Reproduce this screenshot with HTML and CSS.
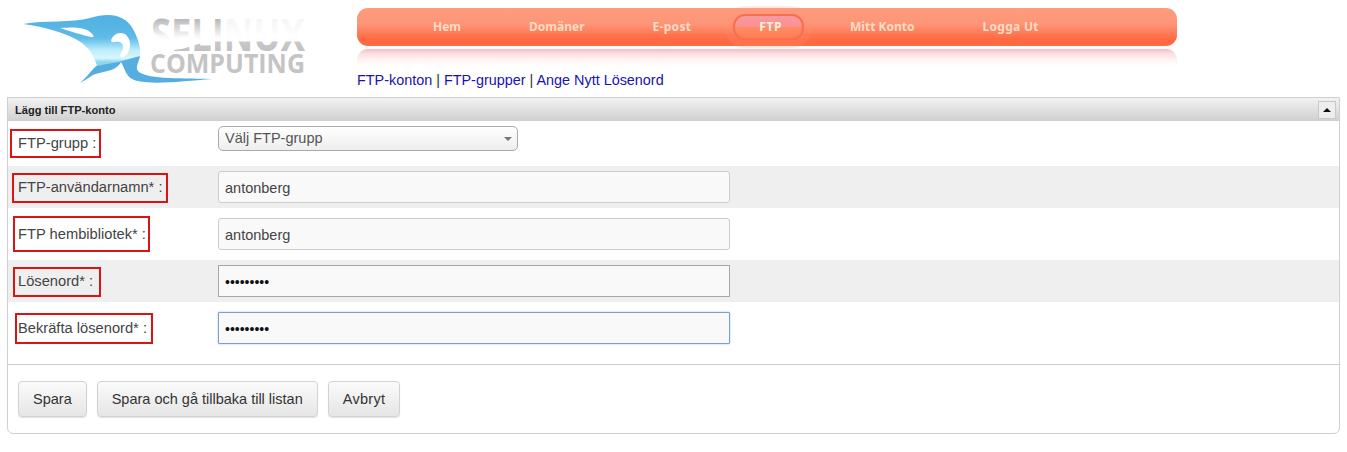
FILE: index.html
```html
<!DOCTYPE html>
<html lang="sv">
<head>
<meta charset="utf-8">
<title>FTP</title>
<link rel="stylesheet" href="styles.css">
</head>
<body>
<header class="top">
  <div class="logo">
    <svg width="357" height="89" viewBox="0 0 357 89" xmlns="http://www.w3.org/2000/svg">
      <defs>
        <linearGradient id="bird" x1="0" y1="14" x2="0" y2="62" gradientUnits="userSpaceOnUse">
          <stop offset="0" stop-color="#4fb0e2"/>
          <stop offset=".5" stop-color="#5fbbe8"/>
          <stop offset=".76" stop-color="#bfeefb"/>
          <stop offset=".92" stop-color="#d8f6fc"/>
          <stop offset="1" stop-color="#8fd6f0"/>
        </linearGradient>
        <linearGradient id="sel" x1="0" y1="18" x2="0" y2="52" gradientUnits="userSpaceOnUse">
          <stop offset="0" stop-color="#b4b4b4"/>
          <stop offset=".54" stop-color="#f8f8f8"/>
          <stop offset=".66" stop-color="#ffffff"/>
          <stop offset=".72" stop-color="#c8c8c8"/>
          <stop offset="1" stop-color="#c0c0c0"/>
        </linearGradient>
      </defs>
      <g font-family="'Open Sans','Liberation Sans',sans-serif" font-weight="700">
        <text class="logo-big" x="151" y="51" textLength="154" lengthAdjust="spacingAndGlyphs" fill="url(#sel)">SELINUX</text>
        <path fill="#fff" d="M145 39H215L182 49L145 53Z"/>
        <path fill="#fff" fill-opacity=".85" d="M222 14H312V38H222Z"/>
        <text class="logo-small" x="150" y="73" textLength="155" lengthAdjust="spacingAndGlyphs" fill="#c4c4c4">COMPUTING</text>
      </g>
      <path fill="url(#bird)" d="M23 24C45 20 72 23 90 18C110 12 125 15 133 29C139 40 141 49 140 57L122 61L116 64L97 66C95 58 90 49 82 43C68 33 45 27 23 24Z"/>
      <path fill="#fff" d="M60 28C72 27 84 27 90 32C94 35 95 38 91 37C82 35 70 31 60 28Z"/>
      <path fill="#fff" d="M111 41C112 34 122 30 127 36C132 42 131 52 124 57C121 59 119 56 121 53C124 49 124 43 119 42C116 41 113 44 111 41Z"/>
      <path fill="#56ade0" d="M80 83C86 78 90 72 96 66L118 62L140 56C139 62 135 67 138 71C145 79 175 78 212 79C185 81 155 85 138 81C125 78 126 70 121 62C116 72 102 71 93 75C88 78 84 81 80 83Z"/>
    </svg>
  </div>
  <div class="top-main">
    <nav class="nav">
      <a class="nav-item" href="#">Hem</a>
      <a class="nav-item" href="#">Domäner</a>
      <a class="nav-item nav-wide" href="#">E-post</a>
      <a class="nav-item nav-active" href="#">FTP</a>
      <a class="nav-item" href="#">Mitt Konto</a>
      <a class="nav-item nav-wide" href="#">Logga Ut</a>
    </nav>
    <div class="nav-reflect"></div>
    <div class="subnav"><a href="#">FTP-konton</a> | <a href="#">FTP-grupper</a> | <a href="#">Ange Nytt Lösenord</a></div>
  </div>
</header>

<section class="panel">
  <div class="panel-title">
    <span>Lägg till FTP-konto</span>
    <button class="collapse" type="button" aria-label="Fäll ihop"><i class="tri"></i></button>
  </div>
  <form class="form">
    <div class="row row-a">
      <div class="label-col"><label class="mark mark-1">FTP-grupp :</label></div>
      <div class="select-wrap">
        <select class="select"><option>Välj FTP-grupp</option></select>
        <i class="select-arrow"></i>
      </div>
    </div>
    <div class="row row-b alt">
      <div class="label-col"><label class="mark mark-2">FTP-användarnamn* :</label></div>
      <input class="field" type="text" value="antonberg">
    </div>
    <div class="row row-c">
      <div class="label-col"><label class="mark mark-3">FTP hembibliotek* :</label></div>
      <input class="field" type="text" value="antonberg">
    </div>
    <div class="row row-b alt">
      <div class="label-col"><label class="mark mark-4">Lösenord* :</label></div>
      <input class="field field-hover" type="password" value="123456789">
    </div>
    <div class="row row-c">
      <div class="label-col"><label class="mark mark-5">Bekräfta lösenord* :</label></div>
      <input class="field field-focus" type="password" value="123456789">
    </div>
    <div class="actions">
      <button class="btn" type="button">Spara</button>
      <button class="btn" type="button">Spara och gå tillbaka till listan</button>
      <button class="btn btn-wide" type="button">Avbryt</button>
    </div>
  </form>
</section>
</body>
</html>
```
FILE: styles.css
```css
* { box-sizing: border-box; }
html, body { margin: 0; padding: 0; background: #fff; }
body { font-family: "Liberation Sans", Arial, sans-serif; font-size: 14.5px; color: #444; }

.top { display: flex; height: 97px; padding-top: 8px; }
.logo { width: 357px; height: 89px; margin-top: -8px; flex: none; }
.logo svg { display: block; }
.logo-big { font-size: 44px; }
.logo-small { font-size: 26px; }
.top-main { width: 820px; flex: none; }

.nav {
  display: flex; align-items: center; gap: 68px;
  height: 38px; padding-left: 76px;
  border-radius: 11px;
  background: linear-gradient(#fd9d7e 0, #fd9577 42%, #ff6a42 82%, #ff6a42 100%);
}
.nav-item {
  font-family: "Noto Sans", "DejaVu Sans", sans-serif; font-size: 12px; font-weight: 700;
  color: #ffdcc4; text-decoration: none; line-height: 14px;
}
.nav-wide { letter-spacing: .3px; }
.nav-active {
  height: 26px; margin: 0 -22px 0 -26px; padding: 4px 20px 0 24px;
  border: 2px solid #f76f50; border-radius: 12px; color: #fff0d8; letter-spacing: .6px;
  background: linear-gradient(#f79ba0 0, #fb9090 48%, #ff8c64 52%, #ff7d52 100%);
  box-shadow: 0 0 0 8px rgba(255,150,120,.2);
}
.nav-reflect {
  height: 17px; margin-top: 3px;
  border-radius: 11px 11px 0 0;
  background: linear-gradient(#fbbcc0 0, #fde0e2 30%, #fff6f6 70%, #fff 100%);
}
.subnav { margin-top: 6px; line-height: 16px; color: #333; font-size: 14.4px; }
.subnav a { color: #1a12b0; text-decoration: none; }

.panel {
  margin: 0 7px; height: 337px;
  border: 1px solid #cfcfcf; border-radius: 0 0 6px 6px;
}
.panel-title {
  display: flex; align-items: center; justify-content: space-between;
  height: 23px; padding: 0 3px 0 7px;
  background: linear-gradient(#f2f2f2, #d0d0d0);
  font-size: 11.1px; font-weight: 700; color: #222;
}
.collapse {
  display: flex; align-items: center; justify-content: center;
  width: 18px; height: 18px; padding: 0;
  border: 1px solid #c8c8c8; background: #eee;
}
.tri { width: 0; height: 0; border: 4px solid transparent; border-top: 0; border-bottom: 4px solid #111; }

.row { display: flex; align-items: center; }
.row-a { height: 45px; }
.row-b { height: 42px; }
.row-c { height: 52px; }
.alt { background: #efefef; }
.label-col { width: 210px; flex: none; }

.mark { display: block; width: fit-content; border: 2px solid #d81414; color: #444; font-size: 14.7px; line-height: 16px; }
.mark-1 { margin-left: 2px; padding: 4px 3px 5px 6px; }
.mark-2 { margin: 2px 0 0 4px; padding: 4px 3px 6px 4px; }
.mark-3 { margin-left: 5px; padding: 8px 2px 8px 3px; }
.mark-4 { margin: 2px 0 0 5px; padding: 4px 6px 6px 3px; }
.mark-5 { margin: 1px 0 0 7px; padding: 5px 4px 6px 1px; }

.select-wrap { position: relative; align-self: flex-start; margin-top: 5px; }
.select {
  display: block; width: 300px; height: 25px; padding: 0 6px 2px;
  appearance: none; -webkit-appearance: none;
  border: 1px solid #aaa; border-radius: 5px;
  background: linear-gradient(#fff, #eee);
  font: 14.5px "Liberation Sans", Arial, sans-serif; color: #555;
}
.select-arrow {
  position: absolute; right: 6px; top: 11px; width: 0; height: 0;
  border: 4px solid transparent; border-top: 4px solid #777; border-bottom: 0;
}

.field {
  display: block; width: 512px; height: 32px; padding: 1px 6px 0;
  border: 1px solid #ccc; border-radius: 3px; background: #f9f9f9;
  font: 14.5px "Liberation Sans", Arial, sans-serif; color: #444; outline: 0;
}
.field[type="password"] { color: #111; font-size: 14px; }
.field-hover { border-color: #a6a6a6; border-radius: 0; }
.field-focus { border-color: #7d9fce; border-radius: 1px; box-shadow: 0 0 2px rgba(100,140,200,.6); }

.actions {
  display: flex; gap: 10px;
  margin-top: 10px; padding: 16px 10px;
  border-top: 1px solid #ccc;
}
.btn {
  height: 36px; padding: 0 14px;
  border: 1px solid #d2d2d2; border-radius: 4px;
  background: linear-gradient(#fbfbfb, #e5e5e5);
  box-shadow: 0 1px 1px rgba(0,0,0,.12);
  font: 14.5px "Liberation Sans", Arial, sans-serif; color: #333;
}
.btn-wide { letter-spacing: .3px; }
```
